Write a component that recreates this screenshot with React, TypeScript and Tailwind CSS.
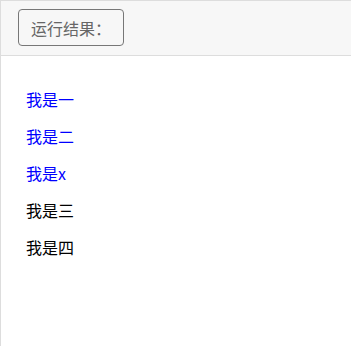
export default function App() {
  const items = [
    { text: "我是一", active: true },
    { text: "我是二", active: true },
    { text: "我是x", active: true },
    { text: "我是三", active: false },
    { text: "我是四", active: false },
  ]

  return (
    <div
      className="h-[346px] w-[351px] overflow-hidden border-l border-t border-[#dddddd] bg-white"
      style={{ fontFamily: '"Microsoft YaHei", "Noto Sans CJK SC", sans-serif' }}
    >
      <div className="h-[55px] border-b border-[#dddddd] bg-[#f7f7f7] pl-[17px] pt-[8px]">
        <button className="h-[37px] w-[106px] rounded-[4px] border border-[#777777] bg-transparent pl-[12px] text-left text-[16px] text-[#666666]">
          运行结果：
        </button>
      </div>
      <ul className="pt-[25px] pl-[25px]">
        {items.map((item) => (
          <li
            key={item.text}
            className={`h-[37px] text-[16px] leading-[37px] ${item.active ? "text-[#0000ff]" : "text-black"}`}
          >
            {item.text}
          </li>
        ))}
      </ul>
    </div>
  )
}
